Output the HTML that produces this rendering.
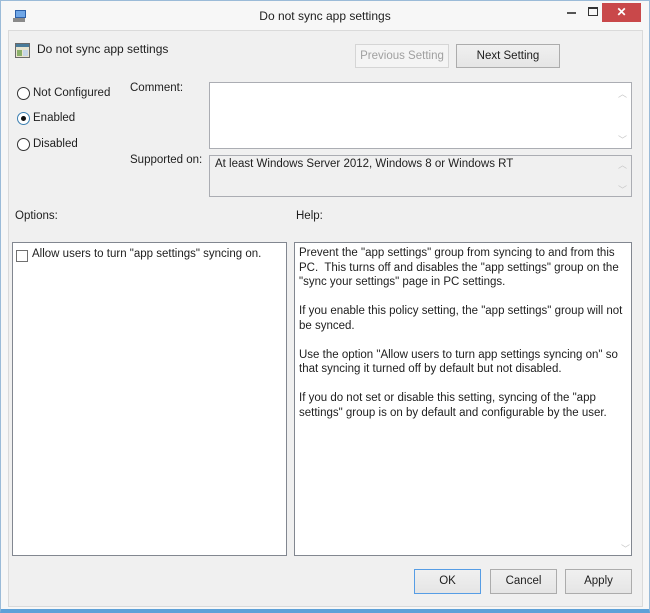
<!DOCTYPE html>
<html><head><style>
*{margin:0;padding:0;box-sizing:border-box}
body{width:650px;height:613px;background:#f7f7f7;font-family:"Liberation Sans",sans-serif;font-size:11.5px;color:#1e1e1e;position:relative;overflow:hidden}
.a{position:absolute}
.frame{left:0;top:0;width:650px;height:613px;border:1px solid #9bbbd8;border-bottom:4px solid #5ea1d8}
.panel{left:8px;top:30px;width:635px;height:577px;background:#f0f0f0;border:1px solid #dadada}
.box{background:#fff;border:1px solid #828790}
.btn{border:1px solid #acacac;background:linear-gradient(#f0f0f0,#e5e5e5);text-align:center;line-height:22px}
.radio{width:13px;height:13px;border:1px solid #333;border-radius:50%;background:#fff}
.sb{color:#c8c8c8;font-size:9px}
</style></head><body>
<div class="a frame"></div>
<svg class="a" style="left:12px;top:8px" width="16" height="16"><rect x="3" y="2" width="11" height="8" fill="#2c5fa8"/><rect x="4" y="3" width="9" height="6" fill="#6fa6e6"/><rect x="1" y="10" width="12" height="4" fill="#8a8a8a"/></svg>
<div class="a" style="left:0;width:650px;top:9px;text-align:center;font-size:12px">Do not sync app settings</div>
<div class="a" style="left:567px;top:12px;width:9px;height:2px;background:#555"></div>
<div class="a" style="left:588px;top:7px;width:10px;height:9px;border:1px solid #333;border-top-width:2px"></div>
<div class="a" style="left:602px;top:3px;width:39px;height:19px;background:#c9484a;color:#fff;text-align:center;line-height:18px;font-size:12px;font-weight:bold">✕</div>
<div class="a panel"></div>
<svg class="a" style="left:15px;top:43px" width="16" height="16"><rect x="0.5" y="0.5" width="14" height="14" fill="#e8e4cf" stroke="#6a6a6a"/><rect x="1" y="1" width="13" height="3" fill="#4a7b9a"/><rect x="2" y="7" width="5" height="6" fill="#8bb06a"/><rect x="8" y="7" width="5" height="6" fill="#c7d6e6"/></svg>
<div class="a" style="left:37px;top:42px;font-size:12px">Do not sync app settings</div>
<div class="a btn" style="left:355px;top:44px;width:94px;height:24px;color:#a0a0a0;border-color:#d5d5d5;background:#f4f4f4">Previous Setting</div>
<div class="a btn" style="left:456px;top:44px;width:104px;height:24px">Next Setting</div>
<div class="a radio" style="left:17px;top:87px"></div><div class="a" style="left:33px;top:87px">Not Configured</div>
<div class="a radio" style="left:17px;top:112px;border-color:#3c7fb1"></div><div class="a" style="left:21px;top:116px;width:5px;height:5px;border-radius:50%;background:#111"></div><div class="a" style="left:33px;top:112px">Enabled</div>
<div class="a radio" style="left:17px;top:138px"></div><div class="a" style="left:33px;top:138px">Disabled</div>
<div class="a" style="left:130px;top:82px">Comment:</div>
<div class="a box" style="left:209px;top:82px;width:423px;height:67px;border-color:#abadb3"></div>
<div class="a sb" style="left:618px;top:87px">︿</div><div class="a sb" style="left:618px;top:133px">﹀</div>
<div class="a" style="left:130px;top:154px">Supported on:</div>
<div class="a box" style="left:209px;top:155px;width:423px;height:42px;background:#f0f0f0;border-color:#abadb3"></div>
<div class="a" style="left:215px;top:158px">At least Windows Server 2012, Windows 8 or Windows RT</div>
<div class="a sb" style="left:618px;top:158px">︿</div><div class="a sb" style="left:618px;top:183px">﹀</div>
<div class="a" style="left:15px;top:210px">Options:</div>
<div class="a" style="left:296px;top:210px">Help:</div>
<div class="a box" style="left:12px;top:242px;width:275px;height:314px"></div>
<div class="a" style="left:16px;top:250px;width:12px;height:12px;border:1px solid #707070;background:#fff"></div>
<div class="a" style="left:32px;top:248px">Allow users to turn "app settings" syncing on.</div>
<div class="a box" style="left:294px;top:242px;width:338px;height:314px"></div>
<div class="a" style="left:299px;top:246px;width:326px;line-height:14.5px">Prevent the "app settings" group from syncing to and from this PC.&nbsp; This turns off and disables the "app settings" group on the "sync your settings" page in PC settings.<br><br>If you enable this policy setting, the "app settings" group will not be synced.<br><br>Use the option "Allow users to turn app settings syncing on" so that syncing it turned off by default but not disabled.<br><br>If you do not set or disable this setting, syncing of the "app settings" group is on by default and configurable by the user.</div>
<div class="a sb" style="left:621px;top:542px">﹀</div>
<div class="a btn" style="left:414px;top:569px;width:67px;height:25px;border-color:#569de5">OK</div>
<div class="a btn" style="left:490px;top:569px;width:67px;height:25px">Cancel</div>
<div class="a btn" style="left:565px;top:569px;width:67px;height:25px">Apply</div>
</body></html>
